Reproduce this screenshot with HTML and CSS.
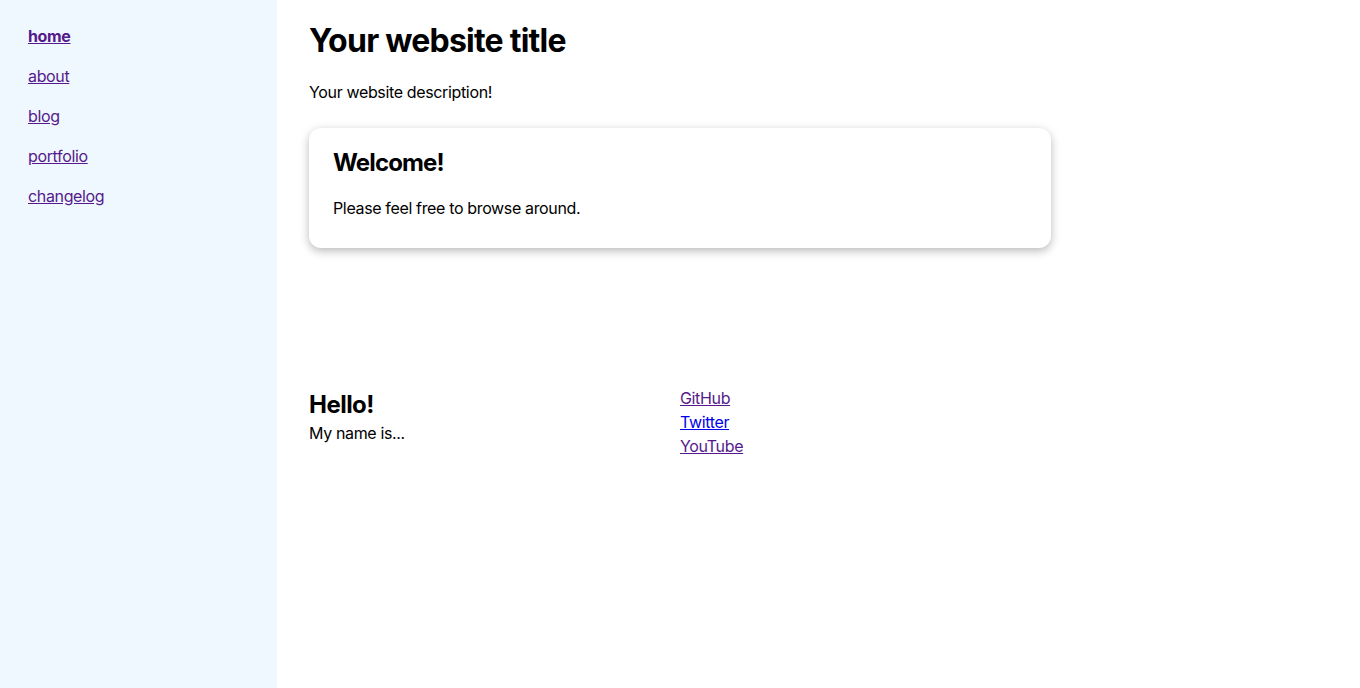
FILE: index.html
```html
<!DOCTYPE html>
<html lang="en">
<head>
<meta charset="utf-8">
<title>Your website title</title>
<link rel="stylesheet" href="styles.css">
</head>
<body>
<div class="layout">
  <nav class="sidebar">
    <a href="#" class="nav-link active">home</a>
    <a href="#" class="nav-link">about</a>
    <a href="#" class="nav-link">blog</a>
    <a href="#" class="nav-link">portfolio</a>
    <a href="#" class="nav-link">changelog</a>
  </nav>
  <main class="main">
    <div class="content">
      <h1 class="title">Your website title</h1>
      <p class="desc">Your website description!</p>
      <section class="card">
        <h2 class="card-title">Welcome!</h2>
        <p class="card-text">Please feel free to browse around.</p>
      </section>
      <footer class="footer">
        <div class="about">
          <h2 class="about-title">Hello!</h2>
          <p class="about-text">My name is...</p>
        </div>
        <div class="links">
          <a href="#" class="ext visited">GitHub</a>
          <a href="#" class="ext">Twitter</a>
          <a href="#" class="ext visited">YouTube</a>
        </div>
      </footer>
    </div>
  </main>
</div>
</body>
</html>
```

FILE: styles.css
```css
html, body {
  margin: 0;
  padding: 0;
  height: 100%;
}
body {
  font-family: Inter, "Liberation Sans", sans-serif;
  font-size: 16px;
  line-height: 24px;
  letter-spacing: -0.022em;
  color: #000;
  background: #fff;
}
.layout {
  display: flex;
  min-height: 688px;
}
.sidebar {
  width: 277px;
  flex-shrink: 0;
  background: #eff7ff;
  box-sizing: border-box;
  padding: 24px 28px;
  display: flex;
  flex-direction: column;
  align-items: flex-start;
  gap: 16px;
}
.nav-link {
  color: #551a8b;
  text-decoration: underline;
}
.nav-link.active {
  font-weight: 700;
}
.main {
  flex: 1;
  padding: 0 32px;
}
.content {
  width: 742px;
}
.title {
  font-size: 32px;
  line-height: 40px;
  font-weight: 700;
  letter-spacing: -0.024em;
  margin: 21px 0 0;
}
.desc {
  margin: 19px 0 0;
}
.card {
  margin-top: 24px;
  border-radius: 12px;
  box-shadow: 0 3px 10px rgba(0,0,0,0.28);
  padding: 19px 24px 28px;
  background: #fff;
}
.card-title {
  font-size: 24px;
  line-height: 32px;
  font-weight: 700;
  letter-spacing: -0.036em;
  margin: 0;
}
.card-text {
  margin: 17px 0 0;
}
.footer {
  margin-top: 138px;
  display: grid;
  grid-template-columns: 1fr 1fr;
}
.about-title {
  font-size: 24px;
  line-height: 32px;
  font-weight: 700;
  letter-spacing: -0.022em;
  margin: 3px 0 0;
}
.about-text {
  margin: 0;
}
.links {
  display: flex;
  flex-direction: column;
  align-items: flex-start;
}
.ext {
  color: #0000ee;
  text-decoration: underline;
}
.ext.visited {
  color: #551a8b;
}
```
